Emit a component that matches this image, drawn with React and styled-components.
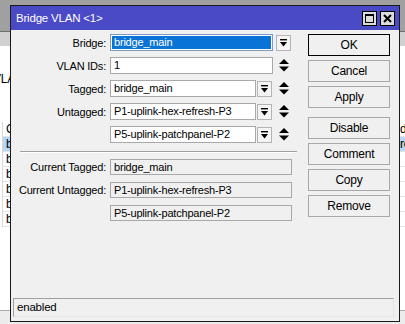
import React from "react";
import styled, { createGlobalStyle } from "styled-components";

const GlobalStyle = createGlobalStyle`
  html, body {
    margin: 0;
    padding: 0;
  }
  body {
    font-family: "Liberation Sans", Arial, sans-serif;
    font-size: 11px;
    letter-spacing: -0.2px;
    color: #000;
    background: #fff;
  }
`;

const Screen = styled.div`
  position: relative;
  width: 405px;
  height: 324px;
  overflow: hidden;
`;

/* ---------- main window behind the dialog ---------- */

const Backdrop = styled.div`
  display: flex;
  flex-direction: column;
  height: 100%;
`;

const TopStrip = styled.div`
  height: 31px;
  background: #a0a0a0;
`;

const ToolStrip = styled.div`
  height: 14px;
  background: #d0d0d0;
  border-top: 1px solid #6e6e6e;
`;

const Content = styled.div`
  flex: 1;
  background: #fff;
  padding-top: 26px;
`;

const TabLabel = styled.div`
  width: 10px;
  overflow: hidden;
  height: 14px;
  line-height: 14px;
  font-size: 12px;
`;

const TabText = styled.span`
  margin-left: -7px;
  white-space: nowrap;
`;

const Table = styled.div`
  margin-top: 36px;
  border-left: 1px solid #d8d8d8;
  margin-left: 2px;
`;

const TableRow = styled.div`
  display: flex;
  justify-content: space-between;
  height: 14px;
  line-height: 14px;
  border-bottom: 1px solid #e4e4e4;
  background: ${(p) => (p.selected ? "#b8d6f6" : "#fff")};
`;

const Cell = styled.div`
  width: 6px;
  padding-left: 3px;
  white-space: nowrap;
  overflow: hidden;
  font-size: 12px;
`;

const EdgeCell = styled.div`
  width: 5px;
  padding-left: 1px;
  border-left: 1px solid #d8d8d8;
  white-space: nowrap;
  overflow: hidden;
  font-size: 12px;
`;

const BottomStrip = styled.div`
  height: 13px;
  background: #ececec;
  border-top: 1px solid #a8a8a8;
`;

/* ---------- dialog ---------- */

const Window = styled.div`
  position: absolute;
  left: 10px;
  top: 5px;
  width: 388px;
  height: 315px;
  border: 1px solid #1a1a1a;
  background: #f0f0f0;
  display: flex;
  flex-direction: column;
`;

const TitleBar = styled.div`
  height: 24px;
  background: #4a4ac6;
  display: flex;
  align-items: center;
  padding: 0 4px 0 5px;
  color: #fff;
  font-size: 11.5px;
`;

const Title = styled.div`
  flex: 1;
`;

const TitleButton = styled.div`
  width: 13px;
  height: 13px;
  margin-left: 3px;
  border: 1px solid #000;
  background: #dcdcdc;
  display: flex;
  align-items: center;
  justify-content: center;
`;

const Body = styled.div`
  flex: 1;
  display: flex;
  flex-direction: column;
`;

const Main = styled.div`
  display: flex;
  padding-top: 4px;
`;

const Form = styled.div`
  width: 286px;
  display: flex;
  flex-direction: column;
`;

const Row = styled.div`
  display: grid;
  grid-template-columns: 95px 1fr;
  column-gap: 4px;
  align-items: center;
  height: 17px;
  margin-bottom: 6px;
`;

const Label = styled.div`
  text-align: right;
  white-space: nowrap;
`;

const Fields = styled.div`
  display: flex;
  align-items: center;
  height: 17px;
`;

const Field = styled.div`
  box-sizing: border-box;
  width: ${(p) => p.w}px;
  height: ${(p) => (p.readOnly ? 16 : 17)}px;
  border: 1px solid ${(p) => (p.focused ? "#7b9bc4" : "#a8a8a8")};
  background: ${(p) => (p.readOnly ? "#f0f0f0" : "#fff")};
  padding: ${(p) => (p.focused ? "1px" : "0 3px")};
  line-height: 15px;
  white-space: nowrap;
  overflow: hidden;
`;

const Selection = styled.div`
  height: 13px;
  line-height: 13px;
  padding: 0 2px;
  background: #0a74d6;
  color: #fff;
`;

const DropButton = styled.div`
  box-sizing: border-box;
  width: 15px;
  height: 16px;
  margin-left: ${(p) => p.gap}px;
  border: 1px solid #b4b4b4;
  background: #f4f4f4;
  display: flex;
  align-items: center;
  justify-content: center;
`;

const Spinner = styled.div`
  width: 10px;
  margin-left: ${(p) => p.gap}px;
  display: flex;
  align-items: center;
  justify-content: center;
`;

const Separator = styled.div`
  margin: 2px 0 5px 9px;
  height: 0;
  border-top: 1px solid #a0a0a0;
  border-bottom: 1px solid #fff;
`;

const Buttons = styled.div`
  margin-left: 11px;
  display: flex;
  flex-direction: column;
`;

const Button = styled.div`
  box-sizing: border-box;
  width: 82px;
  height: 22px;
  margin-bottom: ${(p) => p.after || 4}px;
  border: 1px solid ${(p) => (p.primary ? "#000" : "#a8a8a8")};
  background: #f0f0f0;
  display: flex;
  align-items: center;
  justify-content: center;
  font-size: 12px;
`;

const StatusBar = styled.div`
  margin: auto 5px 4px 2px;
  height: 17px;
  border-top: 1px solid #a0a0a0;
  border-left: 1px solid #a0a0a0;
  border-right: 1px solid #e4e4e4;
  border-bottom: 1px solid #e4e4e4;
  padding-left: 3px;
  line-height: 17px;
  font-size: 11.5px;
`;

/* ---------- icons ---------- */

const DropIcon = () => (
  <svg width="9" height="8" viewBox="0 0 9 8">
    <rect x="1" y="0" width="7" height="1.4" fill="#000" />
    <polygon points="1,3 8,3 4.5,7.5" fill="#000" />
  </svg>
);

const SpinIcon = () => (
  <svg width="10" height="13" viewBox="0 0 10 13">
    <polygon points="5,0 10,5 0,5" fill="#000" />
    <polygon points="0,7.5 10,7.5 5,12.5" fill="#000" />
  </svg>
);

const MaximizeIcon = () => (
  <svg width="9" height="9" viewBox="0 0 9 9">
    <rect x="0.5" y="0.5" width="8" height="8" fill="none" stroke="#000" />
    <rect x="0" y="0" width="9" height="2" fill="#000" />
  </svg>
);

const CloseIcon = () => (
  <svg width="9" height="9" viewBox="0 0 9 9">
    <path d="M1 1 L8 8 M8 1 L1 8" stroke="#000" strokeWidth="2" />
  </svg>
);

const rows = [
  { left: "b", right: "re", selected: true },
  { left: "b", right: "" },
  { left: "b", right: "" },
  { left: "b", right: "" },
  { left: "b", right: "" },
  { left: "b", right: "" },
];

export default function App() {
  return (
    <Screen>
      <GlobalStyle />
      <Backdrop>
        <TopStrip />
        <ToolStrip />
        <Content>
          <TabLabel>
            <TabText>VLA</TabText>
          </TabLabel>
          <Table>
            <TableRow>
              <Cell>C</Cell>
              <EdgeCell>d</EdgeCell>
            </TableRow>
            {rows.map((r, i) => (
              <TableRow key={i} selected={r.selected}>
                <Cell>{r.left}</Cell>
                <EdgeCell>{r.right}</EdgeCell>
              </TableRow>
            ))}
          </Table>
        </Content>
        <BottomStrip />
      </Backdrop>

      <Window>
        <TitleBar>
          <Title>Bridge VLAN &lt;1&gt;</Title>
          <TitleButton>
            <MaximizeIcon />
          </TitleButton>
          <TitleButton>
            <CloseIcon />
          </TitleButton>
        </TitleBar>
        <Body>
          <Main>
            <Form>
              <Row>
                <Label>Bridge:</Label>
                <Fields>
                  <Field w={163} focused>
                    <Selection>bridge_main</Selection>
                  </Field>
                  <DropButton gap={3}>
                    <DropIcon />
                  </DropButton>
                </Fields>
              </Row>
              <Row>
                <Label>VLAN IDs:</Label>
                <Fields>
                  <Field w={163}>1</Field>
                  <Spinner gap={6}>
                    <SpinIcon />
                  </Spinner>
                </Fields>
              </Row>
              <Row>
                <Label>Tagged:</Label>
                <Fields>
                  <Field w={146}>bridge_main</Field>
                  <DropButton gap={1}>
                    <DropIcon />
                  </DropButton>
                  <Spinner gap={7}>
                    <SpinIcon />
                  </Spinner>
                </Fields>
              </Row>
              <Row>
                <Label>Untagged:</Label>
                <Fields>
                  <Field w={146}>P1-uplink-hex-refresh-P3</Field>
                  <DropButton gap={1}>
                    <DropIcon />
                  </DropButton>
                  <Spinner gap={7}>
                    <SpinIcon />
                  </Spinner>
                </Fields>
              </Row>
              <Row>
                <Label />
                <Fields>
                  <Field w={146}>P5-uplink-patchpanel-P2</Field>
                  <DropButton gap={1}>
                    <DropIcon />
                  </DropButton>
                  <Spinner gap={7}>
                    <SpinIcon />
                  </Spinner>
                </Fields>
              </Row>
              <Separator />
              <Row>
                <Label>Current Tagged:</Label>
                <Fields>
                  <Field w={182} readOnly>bridge_main</Field>
                </Fields>
              </Row>
              <Row>
                <Label>Current Untagged:</Label>
                <Fields>
                  <Field w={182} readOnly>P1-uplink-hex-refresh-P3</Field>
                </Fields>
              </Row>
              <Row>
                <Label />
                <Fields>
                  <Field w={182} readOnly>P5-uplink-patchpanel-P2</Field>
                </Fields>
              </Row>
            </Form>
            <Buttons>
              <Button primary>OK</Button>
              <Button>Cancel</Button>
              <Button after={9}>Apply</Button>
              <Button>Disable</Button>
              <Button>Comment</Button>
              <Button>Copy</Button>
              <Button>Remove</Button>
            </Buttons>
          </Main>
          <StatusBar>enabled</StatusBar>
        </Body>
      </Window>
    </Screen>
  );
}
